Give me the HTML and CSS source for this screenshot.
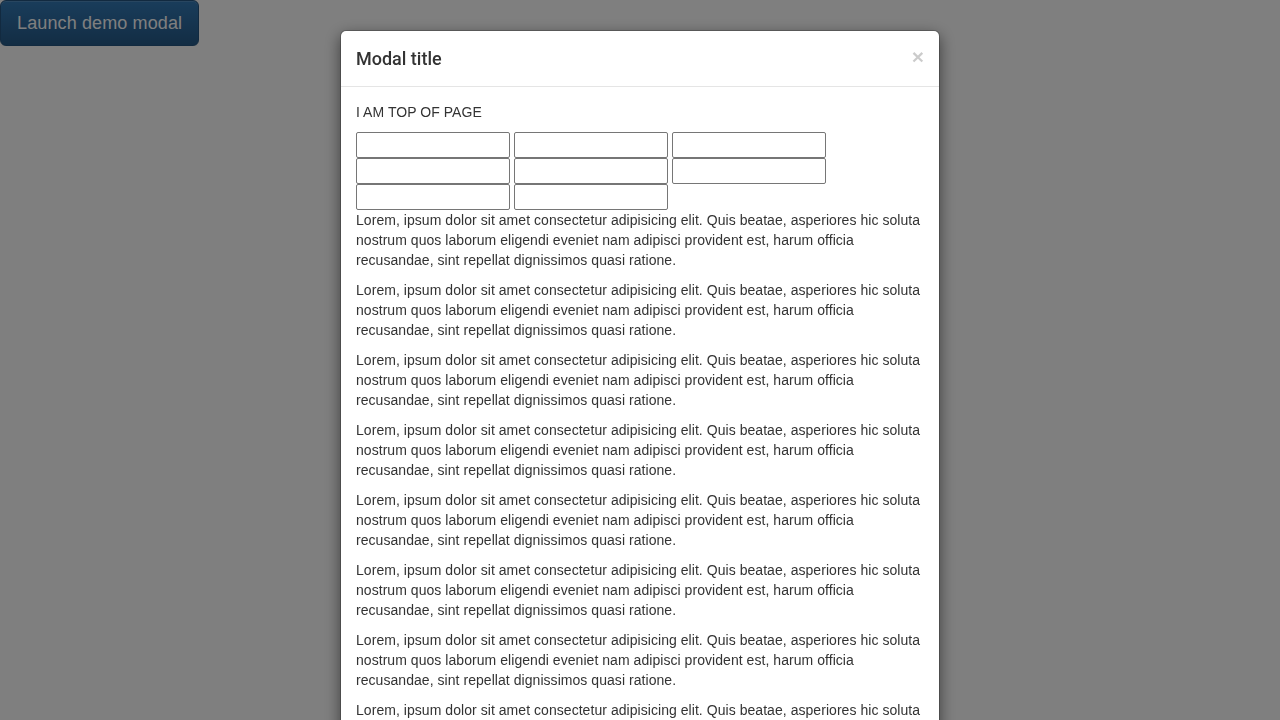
FILE: index.html
```html
<!DOCTYPE html>
<html lang="en">
<head>
    <meta charset="UTF-8">
    <meta name="viewport" content="width=device-width, initial-scale=1.0">
    <title>Modal demo</title>
    <link rel="stylesheet" href="styles.css">
</head>
<body>
    <button class="btn-launch" type="button">Launch demo modal</button>

    <div class="backdrop"></div>

    <div class="modal">
        <div class="modal-dialog">
            <div class="modal-header">
                <button class="close" type="button">&times;</button>
                <h4 class="modal-title">Modal title</h4>
            </div>
            <div class="modal-body">
                <p>I AM TOP OF PAGE</p>
                <div class="fields">
                    <input type="text">
                    <input type="text">
                    <input type="text">
                    <input type="text">
                    <input type="text">
                    <input type="text">
                    <input type="text">
                    <input type="text">
                </div>
                <p>Lorem, ipsum dolor sit amet consectetur adipisicing elit. Quis beatae, asperiores hic soluta nostrum quos laborum eligendi eveniet nam adipisci provident est, harum officia recusandae, sint repellat dignissimos quasi ratione.</p>
                <p>Lorem, ipsum dolor sit amet consectetur adipisicing elit. Quis beatae, asperiores hic soluta nostrum quos laborum eligendi eveniet nam adipisci provident est, harum officia recusandae, sint repellat dignissimos quasi ratione.</p>
                <p>Lorem, ipsum dolor sit amet consectetur adipisicing elit. Quis beatae, asperiores hic soluta nostrum quos laborum eligendi eveniet nam adipisci provident est, harum officia recusandae, sint repellat dignissimos quasi ratione.</p>
                <p>Lorem, ipsum dolor sit amet consectetur adipisicing elit. Quis beatae, asperiores hic soluta nostrum quos laborum eligendi eveniet nam adipisci provident est, harum officia recusandae, sint repellat dignissimos quasi ratione.</p>
                <p>Lorem, ipsum dolor sit amet consectetur adipisicing elit. Quis beatae, asperiores hic soluta nostrum quos laborum eligendi eveniet nam adipisci provident est, harum officia recusandae, sint repellat dignissimos quasi ratione.</p>
                <p>Lorem, ipsum dolor sit amet consectetur adipisicing elit. Quis beatae, asperiores hic soluta nostrum quos laborum eligendi eveniet nam adipisci provident est, harum officia recusandae, sint repellat dignissimos quasi ratione.</p>
                <p>Lorem, ipsum dolor sit amet consectetur adipisicing elit. Quis beatae, asperiores hic soluta nostrum quos laborum eligendi eveniet nam adipisci provident est, harum officia recusandae, sint repellat dignissimos quasi ratione.</p>
                <p>Lorem, ipsum dolor sit amet consectetur adipisicing elit. Quis beatae, asperiores hic soluta nostrum quos laborum eligendi eveniet nam adipisci provident est, harum officia recusandae, sint repellat dignissimos quasi ratione.</p>
                <p>Lorem, ipsum dolor sit amet consectetur adipisicing elit. Quis beatae, asperiores hic soluta nostrum quos laborum eligendi eveniet nam adipisci provident est, harum officia recusandae, sint repellat dignissimos quasi ratione.</p>
            </div>
        </div>
    </div>
</body>
</html>
```

FILE: styles.css
```css
* {
    box-sizing: border-box;
}
body {
    margin: 0;
    font-family: "Liberation Sans", Arial, sans-serif;
    font-size: 14px;
    line-height: 20px;
    letter-spacing: .05px;
    color: #333;
    background-color: #fff;
    overflow: hidden;
}
.btn-launch {
    display: inline-block;
    padding: 10px 16px;
    font-family: inherit;
    font-size: 18px;
    line-height: 24px;
    letter-spacing: .12px;
    color: #fff;
    background-image: linear-gradient(to bottom, #337ab7 0, #265a88 100%);
    border: 1px solid #245580;
    border-radius: 6px;
    box-shadow: inset 0 1px 0 rgba(255, 255, 255, .15), 0 1px 1px rgba(0, 0, 0, .075);
    cursor: pointer;
}
.backdrop {
    position: fixed;
    top: 0;
    right: 0;
    bottom: 0;
    left: 0;
    background-color: #000;
    opacity: .5;
}
.modal {
    position: fixed;
    top: 0;
    right: 0;
    bottom: 0;
    left: 0;
    overflow: hidden;
}
.modal-dialog {
    width: 600px;
    margin: 30px auto;
    background-color: #fff;
    border: 1px solid rgba(0, 0, 0, .2);
    border-radius: 6px;
    box-shadow: 0 5px 15px rgba(0, 0, 0, .5);
    background-clip: padding-box;
}
.modal-header {
    padding: 15px;
    border-bottom: 1px solid #e5e5e5;
}
.modal-title {
    margin: 0;
    font-family: Roboto, "Liberation Sans", sans-serif;
    font-size: 18px;
    font-weight: 500;
    line-height: 25px;
    letter-spacing: 0;
}
.close {
    float: right;
    margin-top: 0;
    padding: 0;
    font-family: inherit;
    font-size: 21px;
    font-weight: bold;
    line-height: 1;
    color: #000;
    opacity: .2;
    background: transparent;
    border: 0;
    cursor: pointer;
}
.modal-body {
    padding: 15px;
}
.modal-body p {
    margin: 0 0 10px;
}
.fields {
    display: flex;
    flex-wrap: wrap;
    column-gap: 4px;
    width: 474px;
}
.fields input {
    width: 154px;
    height: 26px;
    margin: 0;
    padding: 1px 2px;
    font: inherit;
    border: 1px solid #767676;
    border-radius: 2px;
    background: #fff;
}
```
